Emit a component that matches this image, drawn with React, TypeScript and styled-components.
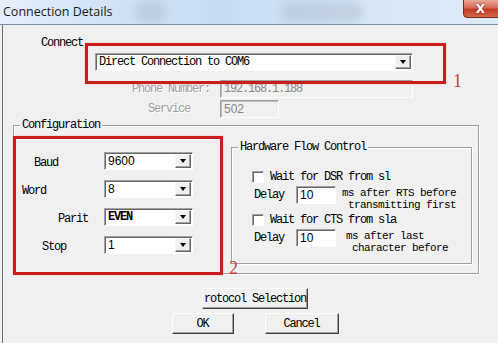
import React from "react";
import styled, { createGlobalStyle } from "styled-components";

const GlobalStyle = createGlobalStyle`
  html, body {
    margin: 0;
    padding: 0;
    background: #f0f0f0;
  }
  * {
    box-sizing: border-box;
  }
`;

const Window = styled.div({
  position: "relative",
  width: "498px",
  height: "343px",
  overflow: "hidden",
  background: "#f0f0f0",
  fontFamily: '"Liberation Mono", "DejaVu Sans Mono", monospace',
  fontSize: "12px",
  letterSpacing: "-1.2px",
  color: "#000",
});

const TitleBar = styled.div({
  position: "relative",
  height: "25px",
  display: "flex",
  alignItems: "center",
  paddingLeft: "3px",
  background:
    "linear-gradient(90deg, #e4eef9 0%, #d3e3f4 20%, #c9dcf1 45%, #d6e5f5 70%, #dfeaf7 100%)",
  borderBottom: "1px solid #7d8ea3",
  overflow: "hidden",
});

const Blur = styled.div<{ $x: number; $w: number }>`
  position: absolute;
  top: 2px;
  left: ${(p) => p.$x}px;
  width: ${(p) => p.$w}px;
  height: 20px;
  background: #a9b6c5;
  opacity: 0.45;
  filter: blur(5px);
  border-radius: 6px;
`;

const Title = styled.span({
  position: "relative",
  fontFamily: '"Open Sans", "Liberation Sans", sans-serif',
  fontSize: "12.5px",
  letterSpacing: "0",
  color: "#1a1a1a",
  marginTop: "-2px",
});

const CloseButton = styled.div({
  position: "absolute",
  top: "-1px",
  right: "-8px",
  width: "43px",
  height: "19px",
  borderRadius: "0 0 4px 4px",
  border: "1px solid #7a2a20",
  background: "linear-gradient(180deg, #e9a99c 0%, #d86b57 45%, #c13b23 55%, #d0664c 100%)",
  display: "flex",
  alignItems: "center",
  justifyContent: "center",
  paddingRight: "8px",
  color: "#fff",
  fontFamily: '"DejaVu Sans", sans-serif',
  fontWeight: 700,
  fontSize: "12px",
  letterSpacing: "0",
  textShadow: "0 0 2px #6a1a10",
});

const Body = styled.div({
  position: "relative",
  height: "318px",
  marginLeft: "2px",
  borderLeft: "1px solid #5f6f80",
  paddingLeft: "1px",
  display: "flex",
  flexDirection: "column",
});

const ConnectLabel = styled.div({
  marginTop: "12px",
  marginLeft: "37px",
  lineHeight: "12px",
});

const ConnectRow = styled.div({
  marginTop: "4px",
  marginLeft: "91px",
});

const FieldRow = styled.div<{ $top: number }>`
  display: flex;
  align-items: center;
  margin-top: ${(p) => p.$top}px;
`;

const GreyLabel = styled.div<{ $left: number; $w: number }>`
  margin-left: ${(p) => p.$left}px;
  width: ${(p) => p.$w}px;
  color: #a0a0a0;
  text-shadow: 1px 1px 0 #ffffff;
`;

const TextBox = styled.div<{ $w: number; $disabled?: boolean }>`
  width: ${(p) => p.$w}px;
  height: 18px;
  display: flex;
  align-items: center;
  padding-left: 3px;
  background: ${(p) => (p.$disabled ? "#f0f0f0" : "#ffffff")};
  border: 1px solid;
  border-color: #a0a0a0 #ffffff #ffffff #a0a0a0;
  box-shadow: inset 1px 1px 0 ${(p) => (p.$disabled ? "#b8b8b8" : "#696969")};
  color: ${(p) => (p.$disabled ? "#8a8a8a" : "#000")};
  font-family: "Liberation Sans", Arial, sans-serif;
  font-size: 12px;
  letter-spacing: 0;
`;

const MonoValue = styled.span({
  fontFamily: '"Liberation Mono", "DejaVu Sans Mono", monospace',
  fontSize: "12px",
  letterSpacing: "-1.2px",
});

const SelectBox = styled.div<{ $w: number }>`
  width: ${(p) => p.$w}px;
  height: 18px;
  display: flex;
  align-items: stretch;
  background: #ffffff;
  border: 1px solid;
  border-color: #a0a0a0 #ffffff #ffffff #a0a0a0;
  box-shadow: inset 1px 1px 0 #696969;
  padding: 1px 1px 1px 2px;
`;

const SelectValue = styled.div<{ $mono?: boolean; $bold?: boolean }>`
  flex: 1;
  display: flex;
  align-items: center;
  padding-left: 1px;
  font-family: ${(p) =>
    p.$mono
      ? '"Liberation Mono", "DejaVu Sans Mono", monospace'
      : '"Liberation Sans", Arial, sans-serif'};
  font-size: 12px;
  letter-spacing: ${(p) => (p.$mono ? "-1.2px" : "0")};
  font-weight: ${(p) => (p.$bold ? 700 : 400)};
`;

const DropButton = styled.div({
  width: "16px",
  background: "#f0f0f0",
  border: "1px solid",
  borderColor: "#f8f8f8 #696969 #696969 #f8f8f8",
  boxShadow: "inset -1px -1px 0 #a0a0a0",
  display: "flex",
  alignItems: "center",
  justifyContent: "center",
});

const Arrow = styled.div({
  width: 0,
  height: 0,
  borderLeft: "3.5px solid transparent",
  borderRight: "3.5px solid transparent",
  borderTop: "4px solid #000",
});

const Group = styled.div<{ $w: number; $h: number; $ml: number; $mt: number }>`
  position: relative;
  width: ${(p) => p.$w}px;
  height: ${(p) => p.$h}px;
  margin-left: ${(p) => p.$ml}px;
  margin-top: ${(p) => p.$mt}px;
  border: 1px solid #a0a0a0;
  box-shadow: 1px 1px 0 #ffffff, inset 1px 1px 0 #ffffff;
`;

const Legend = styled.div({
  position: "absolute",
  top: "-7px",
  left: "6px",
  padding: "0 2px",
  background: "#f0f0f0",
  lineHeight: "12px",
});

const ConfigInner = styled.div({
  display: "flex",
  alignItems: "flex-start",
});

const LeftColumn = styled.div({
  display: "flex",
  flexDirection: "column",
  paddingTop: "26px",
  gap: "10px",
  width: "217px",
});

const ConfigRow = styled.div({
  display: "flex",
  alignItems: "center",
  height: "18px",
});

const RowLabel = styled.div<{ $left: number }>`
  width: 90px;
  padding-left: ${(p) => p.$left}px;
  padding-top: 3px;
`;

const HwRows = styled.div({
  display: "flex",
  flexDirection: "column",
  paddingTop: "22px",
  paddingLeft: "20px",
});

const CheckRow = styled.div({
  display: "flex",
  alignItems: "center",
  gap: "6px",
  height: "13px",
});

const CheckBox = styled.div({
  width: "12px",
  height: "12px",
  background: "#fff",
  border: "1px solid",
  borderColor: "#a0a0a0 #ffffff #ffffff #a0a0a0",
  boxShadow: "inset 1px 1px 0 #696969",
});

const DelayRow = styled.div({
  display: "flex",
  alignItems: "flex-start",
  marginTop: "3px",
  marginLeft: "2px",
  height: "27px",
});

const DelayLabel = styled.div({
  width: "42px",
  paddingTop: "2px",
});

const Note = styled.div<{ $ml: number }>`
  margin-left: ${(p) => p.$ml}px;
  font-size: 11px;
  letter-spacing: -0.6px;
  line-height: 12px;
  padding-top: 1px;
`;

const Buttons = styled.div({
  display: "flex",
  flexDirection: "column",
  alignItems: "center",
  marginTop: "14px",
  gap: "4px",
  width: "502px",
});

const BtnRow = styled.div({
  display: "flex",
  gap: "31px",
});

const Button = styled.div<{ $w: number; $h: number }>`
  width: ${(p) => p.$w}px;
  height: ${(p) => p.$h}px;
  display: flex;
  align-items: center;
  justify-content: center;
  background: #f0f0f0;
  border: 1px solid;
  border-color: #ffffff #404040 #404040 #ffffff;
  box-shadow: inset -1px -1px 0 #a0a0a0;
`;

const RedBox = styled.div<{ $x: number; $y: number; $w: number; $h: number }>`
  position: absolute;
  left: ${(p) => p.$x}px;
  top: ${(p) => p.$y}px;
  width: ${(p) => p.$w}px;
  height: ${(p) => p.$h}px;
  border: 3px solid #c81e1e;
  box-shadow: 0 0 1px #e88;
  pointer-events: none;
`;

const Mark = styled.div<{ $x: number; $y: number }>`
  position: absolute;
  left: ${(p) => p.$x}px;
  top: ${(p) => p.$y}px;
  font-family: "Liberation Serif", "DejaVu Serif", serif;
  font-size: 18px;
  letter-spacing: 0;
  color: #c83a3a;
  line-height: 18px;
`;

const Select = ({
  w,
  value,
  mono,
  bold,
}: {
  w: number;
  value: string;
  mono?: boolean;
  bold?: boolean;
}) => (
  <SelectBox $w={w}>
    <SelectValue $mono={mono} $bold={bold}>
      {value}
    </SelectValue>
    <DropButton>
      <Arrow />
    </DropButton>
  </SelectBox>
);

const configRows = [
  { label: "Baud", left: 20, value: "9600" },
  { label: "Word", left: 8, value: "8" },
  { label: "Parit", left: 44, value: "EVEN", bold: true },
  { label: "Stop", left: 28, value: "1" },
];

export default function App() {
  return (
    <Window>
      <GlobalStyle />
      <TitleBar>
        <Blur $x={135} $w={30} />
        <Blur $x={282} $w={80} />
        <Title>Connection Details</Title>
        <CloseButton>X</CloseButton>
      </TitleBar>
      <Body>
        <ConnectLabel>Connect</ConnectLabel>
        <ConnectRow>
          <Select w={318} value="Direct Connection to COM6" mono />
        </ConnectRow>
        <FieldRow $top={9}>
          <GreyLabel $left={128} $w={88}>
            Phone Number:
          </GreyLabel>
          <TextBox $w={193} $disabled>
            <MonoValue>192.168.1.188</MonoValue>
          </TextBox>
        </FieldRow>
        <FieldRow $top={2}>
          <GreyLabel $left={144} $w={72}>
            Service
          </GreyLabel>
          <TextBox $w={59} $disabled>
            502
          </TextBox>
        </FieldRow>

        <Group $w={466} $h={149} $ml={9} $mt={7}>
          <Legend>Configuration</Legend>
          <ConfigInner>
            <LeftColumn>
              {configRows.map((r) => (
                <ConfigRow key={r.label}>
                  <RowLabel $left={r.left}>{r.label}</RowLabel>
                  <Select w={89} value={r.value} mono={r.bold} bold={r.bold} />
                </ConfigRow>
              ))}
            </LeftColumn>
            <Group $w={241} $h={117} $ml={0} $mt={21}>
              <Legend>Hardware Flow Control</Legend>
              <HwRows>
                <CheckRow>
                  <CheckBox />
                  <span>Wait for DSR from sl</span>
                </CheckRow>
                <DelayRow>
                  <DelayLabel>Delay</DelayLabel>
                  <TextBox $w={40}>10</TextBox>
                  <Note $ml={6}>
                    ms after RTS before
                    <br />
                    &nbsp;transmitting first
                  </Note>
                </DelayRow>
                <CheckRow>
                  <CheckBox />
                  <span>Wait for CTS from sla</span>
                </CheckRow>
                <DelayRow>
                  <DelayLabel>Delay</DelayLabel>
                  <TextBox $w={40}>10</TextBox>
                  <Note $ml={10}>
                    ms after last
                    <br />
                    &nbsp;character before
                  </Note>
                </DelayRow>
              </HwRows>
            </Group>
          </ConfigInner>
        </Group>

        <Buttons>
          <Button $w={106} $h={21}>rotocol Selection</Button>
          <BtnRow>
            <Button $w={62} $h={21}>OK</Button>
            <Button $w={74} $h={21}>Cancel</Button>
          </BtnRow>
        </Buttons>

        <RedBox $x={82} $y={18} $w={361} $h={41} />
        <Mark $x={450} $y={47}>1</Mark>
        <RedBox $x={10} $y={111} $w={210} $h={139} />
        <Mark $x={226} $y={234}>2</Mark>
      </Body>
    </Window>
  );
}
